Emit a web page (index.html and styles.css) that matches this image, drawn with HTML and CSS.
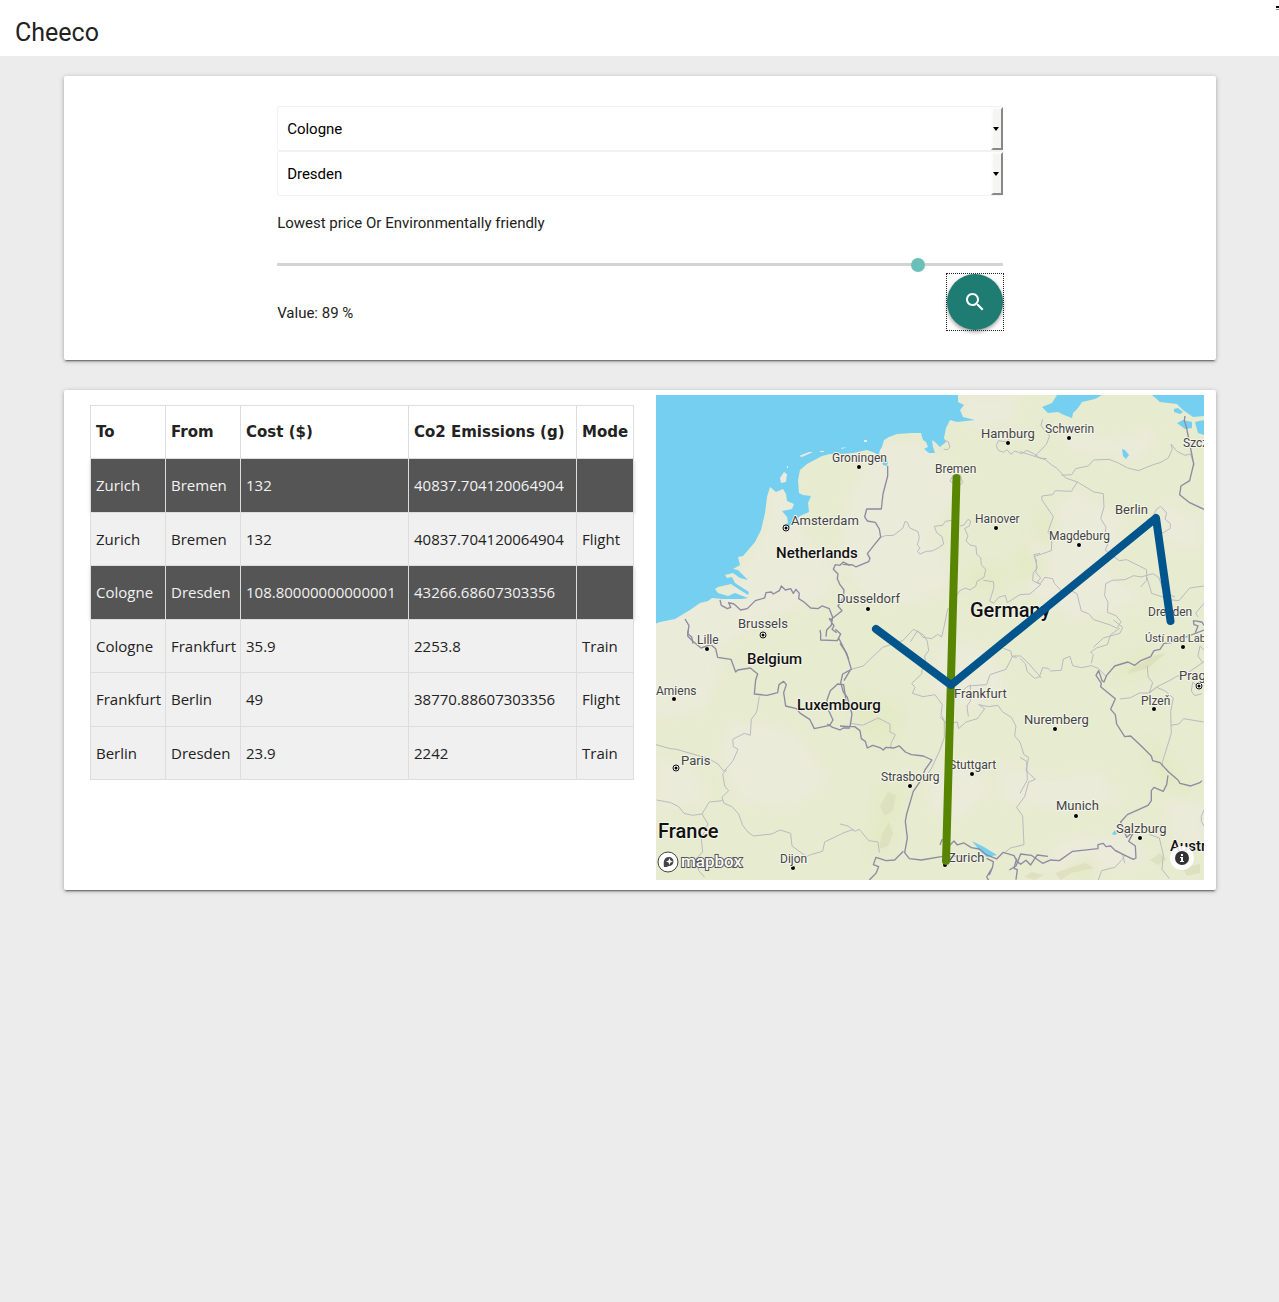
FILE: index.html
```html
<!DOCTYPE html>
<html lang="en">
<head>
<meta charset="utf-8">
<meta name="viewport" content="width=device-width, initial-scale=1">
<title>Cheeco</title>
<link rel="stylesheet" href="styles.css">
</head>
<body>
<header class="topbar">
  <a class="brand" href="#">Cheeco</a>
  <button class="menu-handle" type="button" aria-label="Menu"></button>
</header>
<main class="page">
  <form class="card search-card">
    <div class="search">
      <div class="picker"><select aria-label="From city"><option>Cologne</option><option>Dresden</option></select></div>
      <div class="picker"><select aria-label="To city"><option>Dresden</option><option>Cologne</option></select></div>
      <label class="slider-label" for="weight">Lowest price Or Environmentally friendly</label>
      <input class="slider" id="weight" type="range" min="0" max="100" value="89">
      <div class="search-footer">
        <output class="value" for="weight">Value: 89 %</output>
        <button class="search-button" type="button" aria-label="Search">
          <svg width="24" height="24" viewBox="0 0 24 24" fill="currentColor"><path d="M15.500 14h-.79l-.28-.27C15.410 12.590 16 11.110 16 9.500 16 5.910 13.090 3 9.500 3S3 5.910 3 9.500 5.910 16 9.500 16c1.610 0 3.090-.59 4.230-1.570l.27.28v.79l5 4.990L20.490 19l-4.990-5zm-6 0C7.010 14 5 11.990 5 9.500S7.010 5 9.500 5 14 7.010 14 9.500 11.990 14 9.500 14z"/></svg>
        </button>
      </div>
    </div>
  </form>

  <section class="card results-card">
    <div class="routes-pane">
      <table class="routes">
        <colgroup><col class="col-city"><col class="col-city"><col class="col-number"><col class="col-number"><col class="col-mode"></colgroup>
        <thead><tr><th>To</th><th>From</th><th>Cost ($)</th><th>Co2 Emissions (g)</th><th>Mode</th></tr></thead>
        <tbody>
          <tr class="total"><td>Zurich</td><td>Bremen</td><td>132</td><td>40837.704120064904</td><td></td></tr>
          <tr><td>Zurich</td><td>Bremen</td><td>132</td><td>40837.704120064904</td><td>Flight</td></tr>
          <tr class="total"><td>Cologne</td><td>Dresden</td><td>108.80000000000001</td><td>43266.68607303356</td><td></td></tr>
          <tr><td>Cologne</td><td>Frankfurt</td><td>35.9</td><td>2253.8</td><td>Train</td></tr>
          <tr><td>Frankfurt</td><td>Berlin</td><td>49</td><td>38770.88607303356</td><td>Flight</td></tr>
          <tr><td>Berlin</td><td>Dresden</td><td>23.9</td><td>2242</td><td>Train</td></tr>
        </tbody>
      </table>
    </div>

    <div class="map">
      <svg class="map-canvas" viewBox="656 395 548 485" role="img" aria-label="Route map">
        <defs><filter id="soft" x="-20%" y="-20%" width="140%" height="140%"><feGaussianBlur stdDeviation="6"/></filter></defs>
        <rect class="land" x="656" y="395" width="548" height="485"/>
        <g class="plain" filter="url(#soft)">
          <path d="M775 480l25 10 0 40 40 45-20 25-60 20-60 40-50 50v-90l80-30 35-60z"/>
          <path d="M880 440l50 5 30 40-30 50-60 70-30-50 10-60z"/>
          <path d="M870 545h70l10 40-40 20-50-10z"/>
          <path d="M1075 490l50 30-20 50 40 30-70 20-50-30 10-60z"/>
          <path d="M730 720l60 10 40 50-40 30-50-10-20-40z"/>
          <path d="M665 640l60 20-20 50-49 10v-60z"/>
          <path d="M940 640l50 10 20 40-40 20-40-20z"/>
          <path d="M960 395h60l-10 25-40 10z"/>
          <path d="M1160 500l40 20v30l-40-10z"/>
          <path d="M1000 765l50 15 50-10 20 30-60 10-60-10z"/>
          <path d="M930 770l40-10 20 30-30 30-30-10z"/>
          <path d="M656 755l40 15 10 30-50 10z"/>
          <path d="M1060 430l60 10 40-10-20 30-70-10z"/>
          <path d="M1060 840l70-5 20 25-50 10-60 0z"/>
          <path d="M1165 800l39 5v40l-30-5z"/>
        </g>
        <g class="forest" filter="url(#soft)">
          <path d="M1020 550l30 10-10 20-25-5z"/><path d="M880 790l25-5-15 60-20 10z"/>
          <path d="M1140 740l30 20 20 40-30-20z"/><path d="M850 690l50 20-10 40-30-20z"/>
          <path d="M1040 510l20 10-10 30-18-10z"/><path d="M1110 670l40-20 10 15-35 15z"/>
          <path d="M1060 870l30-15 10 10-20 15z"/><path d="M975 565l30 5-10 20-30-5z"/>
        </g>
        <path class="relief" d="M1129 670l25-14 12-3-18 15-20 6zM880 806l8-14 8 3-3 15-8 6zM882 834l7-12 4 11-5 13-9 3zM1055 873l30-10 9 5-23 5-10 7zM1024 877l8-5 12 3-9 5zM1150 860l10-7 7 6-9 6zM1183 868l17-4v9l-13 3z"/>

        <g class="water">
          <path d="M656 395h302v7l6 3-4 5 3 7 12 3-18 2-7-2-4 8-2 10 2 4-6 5-5-5-3-2 1 7 2 6-6 0-5-4 4-2-2-5-3-2-2-7-9 0-15 1-8 3-5 3-2 7-2 3-1 4 9 8-1 4-4-1-2-7-6-5-8-3-14 3-13 1-10 0-8 2-15 8-7 6-2 10 1 13 4 2 8 1-3 7 1 9-9 4-8 7-5 8-4-1 0-5 5-2-1-6-5-6 10-2 2-5-7-3-1-7-3-5-7 3-6-5-3 10-2 16-4 17-6 12-12 14-5 1 2 8-7 4 5 1 10 10-8-2-7-5-8 2 2 3 5-1 3 6 14 9-1 3-8-5-9-6-13 3-3 2 3 4 10 3 7-3 13 5-6 1h-19l-11-1-4 3-8 2-10 7-15 9-15 3-14 5z"/>
          <path d="M1042 407l10-4 5-8h45l-7 4-13 3-4 6-5 5-1 5-8-3-6-3-10 1zM1152 395h52v21l-11 1-10-7-6-6-17-2zM1174 409l4-1 5 4-3 2-6-2zM1177 423l6-3 9 2v6l-7 1zM1195 422l9-2v15l-6-2zM1122 449l3 1 4 5-3 4-3-3zM972 841l12 6 13 8-10 2-7-6zM1112 834l3-4 2 4-3 1z"/>
        </g>
        <path class="island" d="M780 478l4-6 3 2-1 8-5 1zM799 456l10-4 4 0-11 5zM820 451h4v1h-4zM841 448l6-1-5 2zM864 440h3v2h-3zM787 466h1v2h-1z"/>

        <g class="borders states" transform="translate(840 390) scale(.3333)">
          <path d="M122 442l14-5 25-1 28-22 6-20 8 4 5 15 26 12 4 18-6 22 8 8-8 12 9 7 18-8 18-1 16-8 18-13-5-22-16-12-7-19 25-3 8-12 27-4M360 408l12-3 12-17 8 5-4 15-14 8 10 22-6 15 12 12 18 4 2 24 12 10 2 21 13 14-5 24-22 13-2 13-18 12-14-6-18 9-8 14-22 16 5 23-10 1-10 50-8 34-12-8-18 13-26-4-16-20-22 34M430 571l30 4 2 16-7 24-6 18 12 7 15-18 20-6 6 22 38-24 30-2 32-28M600 490l-18 4 10 40-12 14-2 24 25 12M310 150l15 5 5 16-7 8-12-1M340 255l-10 18 24 17 14-12-8-25M475 152l-6 15 6 14 16 6 10-8 12 14 12-10 20 8 15-10 20 9 20 14 20 2M475 152l25 4 10-12 40-8"/>
        </g>
        <g class="borders states" transform="translate(1020 390) scale(.3333)">
          <path d="M68 88l-5 18 8 12 18 20-10 25-35 36-44-14M44 199l32 10 18 15 18 12 25 28 35 12 50 30 28 5 2 40-10 35 16 25-4 36 10 12-8 22 42 31 22-3 60 30 0 32-18 20M172 276l-18 28-48-2-8 12-32 4 0 12 34 50-12 34-4 14 12 12-2 42-52 18 8 10-2 38 14 16-12 14 12 2 12-18 24 4 5 14 24 26 14-10 30 15 13 52 22 8 15 18 50 16 20 10 12-20-15-18-26-10 2-30-10-20 3-36 20-10 38-2 26-12 22 4 36-10 18 12 10 32 28 22 10 4M125 256l30-2 12-18 38-8 16-18 46-2 26 10 30 16 32 8 45-18 20-6 25-14 12-26-4-16 18 22 24 12 16-4 12 32M380 560l15 50 60 20 22 2 32-38 43-6M395 385l15-28 12-8 18 20-5 18 16 14 0 14-22 14-18-8 M380 390l15-5"/>
          <path d="M552 640l-25 30 8 12M280 690l28 22-8 18-50 14-30 28"/>
        </g>
        <g class="borders states" transform="translate(650 630) scale(.3333)">
          <path d="M328 200l-8 46-16 22-3 48-18-6-35 18 2 22 14 8-16 36-26 30-18-22-32-18-30-8-28-8-34-10-20-2-42-12M230 420l-12 12 6 36 12 14-20 20 6 18 24 10 20 22 12 34 16 20 16 12 56-6 24-12 32 10 4 38 44 32 12-6 36-10 6-28 58-28 30-10M218 512l-40 4-22 36 18 30-20 44 4 40-18 18 6 38 18 20M156 552l-28 4-26-6-16-20-24-12-42-8"/>
        </g>
        <g class="borders states" transform="translate(840 630) scale(.3333)">
          <path d="M34 118l36-10 18-18 40-38 60-20 32-34 30 16 12 20 4 28-12 16 3 20-10 12-2 22-30 28 10 12-8 18 32 10 36-6 22 30-4 30 10 18 0 50-14 40-24 52-26 38M32 280l36 6 46-22 36 18 0 24 16 8-12 24-2 14M300 260l20 22 32-6 4 20 22-20 34-10 22-30-18-12 30 6 28-4 14 20 26 16 14 26-4 30 16 18 12 38 14 8-8 40 28 26-20 8-12 44-24 32 18 26 4 86-40 10-16 12M370 180l15-12 55-4 10-30 48-16 20-40 24 0 20 18 42 48M490 55l22 8 4 16 14 4M385 260l-4-32 10-14 0-50M0 582l24 6 20 16 14-6 28 34 28 4 4 32"/>
        </g>
        <g class="borders states" transform="translate(1020 630) scale(.3333)">
          <path d="M0 85l16 16 6 24 22 20 14-4 10-28 16 2 8 8 32-2 6-34 20-8 8 28 26 6 30-6 20 8 26 26M214 100l6-26-8-8 18-12 32-10 10-30 28-20M382 108l2 32 14 18-10 30 22-16 24 10 26 22-8 40 2 66-26 84-2 16M300 207l32-4 26-14 30 0 22-18 40-20 20-12 30-8 52-36M452 286l25-4 14-16 60 10M530 165l-12-8-4 26 10 14 22-6M552 60l-12-12-6 30 14 20M0 382l20 12 2 56-22 40M552 540l-8 20 0 14 8 14M315 700l-8-28-20-12M235 750l10-28 40-10 22-24 8-12M392 590l-2 24 28 10 12 50-4 44 22 28"/>
        </g>

        <g class="borders" transform="translate(650 390) scale(.3333)">
          <path d="M210 630l4 16 18 10 10-4-6-14 16 4 20 18 20-4 24-24 28-8 4-16 16-2 6 6 18-10 6-14 12 12 16-4 8 14 8-12 10 12-2 16 16 10 20 18 22 2 12-8 22 8 10 26-4 24-14 14-2 20M600 526l-20-10-10 10-14-2-6 14 14 14-2 14 8 18 12 16-2 24-16 24 12 14-32 26-6-2 14 22-6 10 14 10M105 687l12 20-4 24 12 10 4 20"/>
        </g>
        <g class="borders" transform="translate(840 390) scale(.3333)">
          <path d="M143 228l0 30-14 54-5 45-44 0-6 24 8 12 24 4 12 20 4 24-18 22-22 28 8 14-4 10-38 16-10-6-30-2"/>
        </g>
        <g class="borders" transform="translate(1020 390) scale(.3333)">
          <path d="M495 78l-2 14 6 18 8 40 14 72-12 50-26 16-4 26 30 24 43 20M520 692l26 4 6 10M520 692l2 12 12 4-8 20"/>
        </g>
        <g class="borders" transform="translate(650 630) scale(.3333)">
          <path d="M115 0l-2 18 14 14 26 22 30-10 14 12 6 26 40 6 14 38 6-6 38-6 22 18-6 18-4 42 38 4 32-8 4-24 14-10 8 10-8 24 6 40 32 8 12 14 28 18 14 28 46-10 10-16-12-26-6-34 10-28 22-20 18 2 6 40 0 28M510 0l2 10 0 20 50 2 10-20-16-14M566 24l20 40 10 24M600 122l-18 30M532 282l16 10 22 8 10-6 20 0"/>
        </g>
        <g class="borders" transform="translate(840 630) scale(.3333)">
          <path d="M0 40l20 30 14 48-26 14-6 26 8 28 12 16 14 50-6 38-30-2M32 290l12 0 16 12 4 24 12 8 6 20 16-8 24 8 8 6 8-8 24 2 16-6 18 18 18 8 36 4 26 12-20 28-18 40-18 26-20 68-4 22 6 50-8 44 14 18 36 4 60-10 32 0 36-4M190 664l-26 26-26 2-30-10-8 22 16 6-8 20-20 20M300 645l6-16 12 2 12 14 12-12 10 12 20-6 22 14 24 4 22 18 30 12 20-20 32 10 10 18 10 8 16-12 14 14 20-30 32 4M440 685l20 10-2 16-18 30 6 10M458 711l-10 24M530 685l-8 30 10 4-4 30"/>
        </g>
        <g class="borders" transform="translate(1020 630) scale(.3333)">
          <path d="M552 0l-62 24-36 14-22 2-12 18-18 4-10 18-30 12-18 14-20-10-40 12-24 28-8 20-6-4-10-30-8 14 16 24-2 10 44 36-14 32 14 16 4 28 24 38 18-2 28 26 34 34 4 14 22 6 26 28 28 24 6 10 32 8 28-10 6-6M444 436l-4 28-10 20-28-12-8 10 0 30-10 14-62 28-20 22 18 46 22-18-16 30 20 14 2 36-8 4-54-26-14-14-14 2-8-10-16 4 0 12-76 8-40 28-26-2-24 10-34-24-32-4-14 36-20 12"/>
        </g>

        <g class="dots">
          <circle cx="1008" cy="443" r="2"/><circle cx="1069" cy="438" r="2"/><circle cx="859" cy="467" r="2"/><circle cx="996" cy="528" r="2"/><circle cx="1079" cy="545" r="2"/><circle cx="868" cy="609" r="2"/><circle cx="707" cy="649" r="2"/><circle cx="674" cy="699" r="2"/><circle cx="1183" cy="647" r="2"/><circle cx="1154" cy="709" r="2"/><circle cx="1055" cy="729" r="2"/><circle cx="972" cy="774" r="2"/><circle cx="910" cy="786" r="2"/><circle cx="1076" cy="816" r="2"/><circle cx="1140" cy="838" r="2"/><circle cx="793" cy="868" r="2"/><circle cx="945" cy="865" r="2"/>
        </g>
        <g class="capitals">
          <circle cx="786" cy="528" r="3"/><circle cx="763" cy="635" r="3"/><circle cx="676" cy="768" r="3"/><circle cx="1199" cy="686" r="3"/>
        </g>
        <g class="capital-cores"><circle cx="786" cy="528" r="1.500"/><circle cx="763" cy="635" r="1.500"/><circle cx="676" cy="768" r="1.500"/><circle cx="1199" cy="686" r="1.500"/></g>

        <g class="labels">
          <text x="981" y="438">Hamburg</text><text x="1045" y="433" class="small">Schwerin</text><text x="1183" y="447" class="small">Szcz</text>
          <text x="832" y="462" class="small">Groningen</text><text x="935" y="473" class="small">Bremen</text><text x="791" y="525">Amsterdam</text>
          <text x="975" y="523" class="small">Hanover</text><text x="1049" y="540" class="small">Magdeburg</text><text x="1115" y="514">Berlin</text>
          <text x="837" y="603">Dusseldorf</text><text x="738" y="628">Brussels</text><text x="697" y="644" class="small">Lille</text>
          <text x="656" y="695" class="small">Amiens</text><text x="1148" y="616" class="small">Dresden</text><text x="1145" y="642" class="tiny">Ústí nad Lab</text>
          <text x="1179" y="680">Prag</text><text x="1141" y="705" class="small">Plzeň</text><text x="954" y="698">Frankfurt</text>
          <text x="1024" y="724">Nuremberg</text><text x="949" y="769" class="small">Stuttgart</text><text x="881" y="781" class="small">Strasbourg</text>
          <text x="681" y="765">Paris</text><text x="1056" y="810">Munich</text><text x="1116" y="833">Salzburg</text>
          <text x="780" y="863" class="small">Dijon</text><text x="948" y="862">Zurich</text>
        </g>
        <g class="labels countries">
          <text x="776" y="558">Netherlands</text><text x="747" y="664">Belgium</text><text x="797" y="710">Luxembourg</text><text x="1170" y="851">Austr</text>
          <text x="970" y="617" class="large">Germany</text><text x="658" y="838" class="large">France</text>
        </g>
        <path class="route direct" d="M956.500 478L946 861"/>
        <path class="route transfer" d="M876 629L951 685L1156 518L1170.500 621"/>
        <g class="logo">
          <circle cx="668" cy="862" r="10"/><path d="M664 867c-1-7 1-10 5-10a4.500 4.500 0 0 1 0 9c-2 1-3 1-5 1z"/><path class="spark" d="M669.500 858l1 2.500 2.500 1-2.500 1-1 2.500-1-2.500-2.500-1 2.500-1z"/>
          <text x="681" y="867">mapbox</text>
        </g>
      </svg>
      <button class="map-info" type="button" aria-label="Map attribution"><svg width="16" height="16" viewBox="0 0 16 16"><circle cx="8" cy="8" r="7" fill="#333"/><path d="M6 7h3v4h1v1H6v-1h1V8H6zM7 4h2v2H7z" fill="#fff"/></svg></button>
    </div>
  </section>
</main>
</body>
</html>
```
FILE: styles.css
```css
*, *::before, *::after { box-sizing: border-box; }
body { margin: 0; background: #ececec; color: #222; font: 15px/1.5 Roboto, sans-serif; }

.topbar { position: relative; display: flex; align-items: center; height: 56px; padding: 10px 15px 0; background: #fff; }
.brand { color: #222; font-size: 25px; text-decoration: none; }
.menu-handle { position: absolute; top: 6px; right: 0; width: 3px; height: 4px; padding: 0; border: 0; border-top: 2px solid #000; border-bottom: 1px solid #888; background: #fff; }

.page { display: flex; flex-direction: column; gap: 30px; padding: 20px 63px 20px 64px; }
.card { background: #fff; border-radius: 2px; box-shadow: 0 2px 2px rgba(0,0,0,.14), 0 3px 1px -2px rgba(0,0,0,.3), 0 1px 5px rgba(0,0,0,.25); }

.search-card { padding: 30px 0; }
.search { width: 63%; margin: 0 auto; }
.picker { position: relative; }
.picker select { display: block; width: 100%; height: 45px; padding: 0 9px; border: 1px solid #f2f2f2; border-radius: 2px; background: #fff; color: #000; font: 15px Roboto, sans-serif; appearance: none; }
.picker::before { content: ""; position: absolute; top: 1px; right: 0; bottom: 1px; width: 12px; border: 2px solid; border-color: #fcfcfc #888 #888 #fcfcfc; background: #f5f5f4; pointer-events: none; }
.picker::after { content: ""; position: absolute; top: 21px; right: 4px; border: 3px solid transparent; border-top: 4px solid #000; border-bottom: 0; pointer-events: none; }
.slider-label { display: block; margin-top: 16px; line-height: 22px; }
.slider { display: block; width: 100%; height: 14px; margin: 23px 0 3px; background: transparent; appearance: none; }
.slider::-webkit-slider-runnable-track { height: 3px; background: #d3d3d3; }
.slider::-webkit-slider-thumb { width: 14px; height: 14px; margin-top: -5px; border-radius: 50%; background: #69c0b8; appearance: none; }
.search-footer { display: flex; align-items: flex-end; justify-content: space-between; }
.value { padding-bottom: 6px; line-height: 22px; }
.search-button { position: relative; display: grid; place-items: center; width: 56px; height: 56px; padding: 0; border: 0; border-radius: 50%; background: #1f7c73; color: #fff; box-shadow: 0 2px 4px rgba(0,0,0,.4); }
.search-button::before { content: ""; position: absolute; inset: -1px; border: 1px dotted #222; }

.results-card { display: grid; grid-template-columns: minmax(0, 544fr) minmax(0, 548fr); gap: 22px; align-items: start; padding: 5px 12px 10px 26px; }
.routes-pane { padding-top: 10px; }
.routes { width: 100%; border-collapse: collapse; table-layout: fixed; font-family: "Open Sans", sans-serif; }
.col-city { width: 75px; }
.col-number { width: 168px; }
.routes th, .routes td { padding: 15px 5px; border: 1px solid #ddd; text-align: left; white-space: nowrap; }
.routes th { font-family: "DejaVu Sans", sans-serif; font-weight: 700; line-height: 22px; }
.routes tbody tr { background: #f0f0f0; }
.routes tbody .total { background: #555; color: #f2f2f2; box-shadow: 0 2px 4px rgba(0,0,0,.2); }

.map { position: relative; }
.map-canvas { display: block; width: 100%; height: auto; }
.land { fill: #e7ebcf; }
.plain { fill: #ecebdd; opacity: .85; }
.forest { fill: #e1e9bd; opacity: .6; }
.relief { fill: #d8dbb8; opacity: .6; }
.water { fill: #75cff0; }
.island { fill: #ecebdd; }
.borders { fill: none; stroke: #8c8ba2; stroke-width: 4; stroke-linejoin: round; }
.states { stroke: #b9bac2; stroke-width: 3; }
.dots { fill: #000; stroke: #fff; stroke-width: 1; paint-order: stroke; }
.capitals { fill: #fff; stroke: #111; stroke-width: 1; }
.capital-cores { fill: #000; }
.labels { fill: #444; font: 13px Roboto, sans-serif; stroke: #f4f4ea; stroke-width: 2px; stroke-linejoin: round; paint-order: stroke; }
.labels .small { font-size: 12px; }
.labels .tiny { font-size: 11px; }
.countries { fill: #111; font-size: 15px; font-weight: 500; }
.countries .large { font-size: 20px; }
.route { fill: none; stroke-width: 8; stroke-linecap: round; stroke-linejoin: round; }
.direct { stroke: #588600; }
.transfer { stroke: #00558c; }
.logo { fill: #444; }
.logo circle { fill: #fff; stroke: #444; stroke-width: 1; }
.logo .spark { fill: #fff; }
.logo text { fill: #fff; font: 500 17px Roboto, sans-serif; stroke: #555; stroke-width: 2px; paint-order: stroke; }
.map-info { position: absolute; right: 10px; bottom: 10px; display: grid; place-items: center; width: 24px; height: 24px; padding: 0; border: 0; border-radius: 50%; background: rgba(255,255,255,.9); }
```
